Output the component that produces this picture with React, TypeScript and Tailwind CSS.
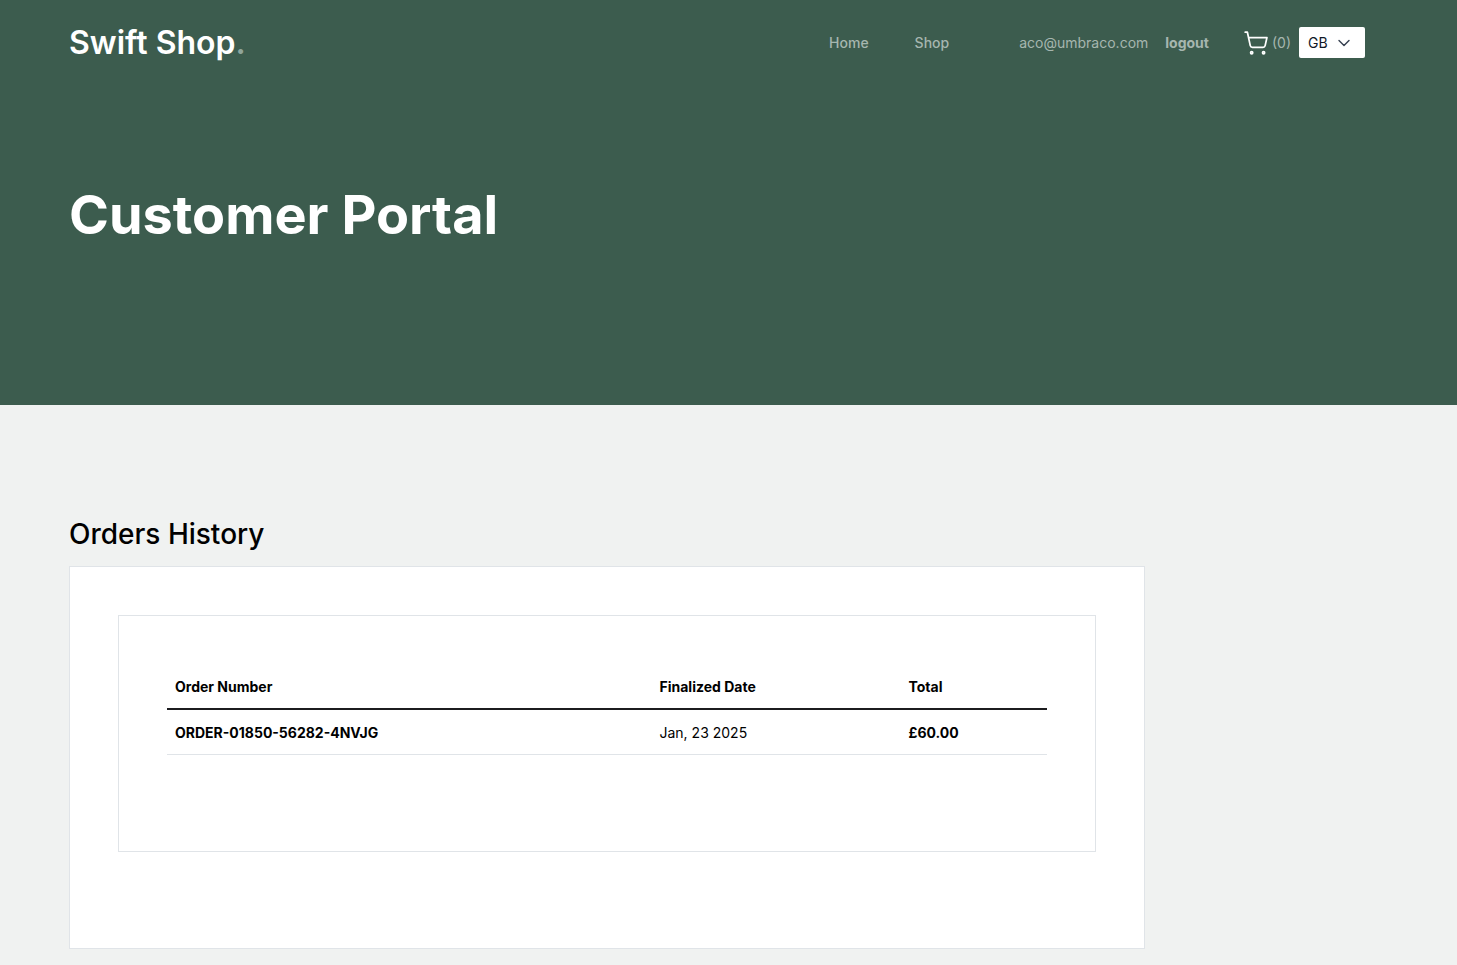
import { ChevronDown, ShoppingCart } from 'lucide-react';

const orders = [
  { number: 'ORDER-01850-56282-4NVJG', date: 'Jan, 23 2025', total: '£60.00' },
];

export default function App() {
  return (
    <div className="min-h-[965px] bg-[#f0f2f1] font-['Inter',sans-serif] text-black">
      <header className="h-[405px] bg-[#3c5c4e] pl-[69px] pr-[92px]">
        <div className="flex h-[85px] items-center">
          <a className="text-[32px] leading-none font-semibold text-white">
            Swift Shop<span className="text-[#8fa59b]">.</span>
          </a>
          <nav className="ml-auto flex items-center text-sm font-medium text-[#a6b6af]">
            <a>Home</a>
            <a className="ml-[46px]">Shop</a>
          </nav>
          <span className="ml-[70px] text-sm text-[#a6b6af]">aco@umbraco.com</span>
          <a className="ml-[17px] text-sm font-bold text-[#a6b6af]">logout</a>
          <div className="ml-[34px] flex items-center">
            <ShoppingCart size={26} strokeWidth={1.6} className="text-white" />
            <span className="ml-[3px] text-sm text-[#a6b6af]">(0)</span>
          </div>
          <div className="ml-2 flex h-[31px] w-[66px] items-center justify-between rounded-[2px] bg-white pl-[9px] pr-[11px] text-sm text-[#111827]">
            GB
            <ChevronDown size={20} strokeWidth={1.7} className="text-[#374151]" />
          </div>
        </div>
        <h1 className="mt-[94px] text-[54px] leading-[72px] font-bold text-white">
          Customer Portal
        </h1>
      </header>

      <main className="px-[69px] pt-[112px]">
        <h2 className="text-[28px] leading-[34px] font-medium">Orders History</h2>
        <div className="mt-[15px] w-[1076px] border border-[#e0e4e8] bg-white px-12 pt-12 pb-24">
          <div className="h-[237px] border border-[#e0e4e8] px-12 pt-12">
            <table className="w-[880px] table-fixed border-collapse text-sm">
              <thead>
                <tr className="h-[45px] border-b-2 border-[#1c1c1f] text-left">
                  <th className="w-[484.5px] px-2 pt-[2px] font-bold">Order Number</th>
                  <th className="w-[249px] px-2 pt-[2px] font-bold">Finalized Date</th>
                  <th className="px-2 pt-[2px] font-bold">Total</th>
                </tr>
              </thead>
              <tbody>
                {orders.map((order) => (
                  <tr key={order.number} className="h-[45px] border-b border-[#e0e4e8]">
                    <td className="px-2 pt-[2px] font-bold">{order.number}</td>
                    <td className="px-2 pt-[2px]">{order.date}</td>
                    <td className="px-2 pt-[2px] font-bold">{order.total}</td>
                  </tr>
                ))}
              </tbody>
            </table>
          </div>
        </div>
      </main>
    </div>
  );
}
